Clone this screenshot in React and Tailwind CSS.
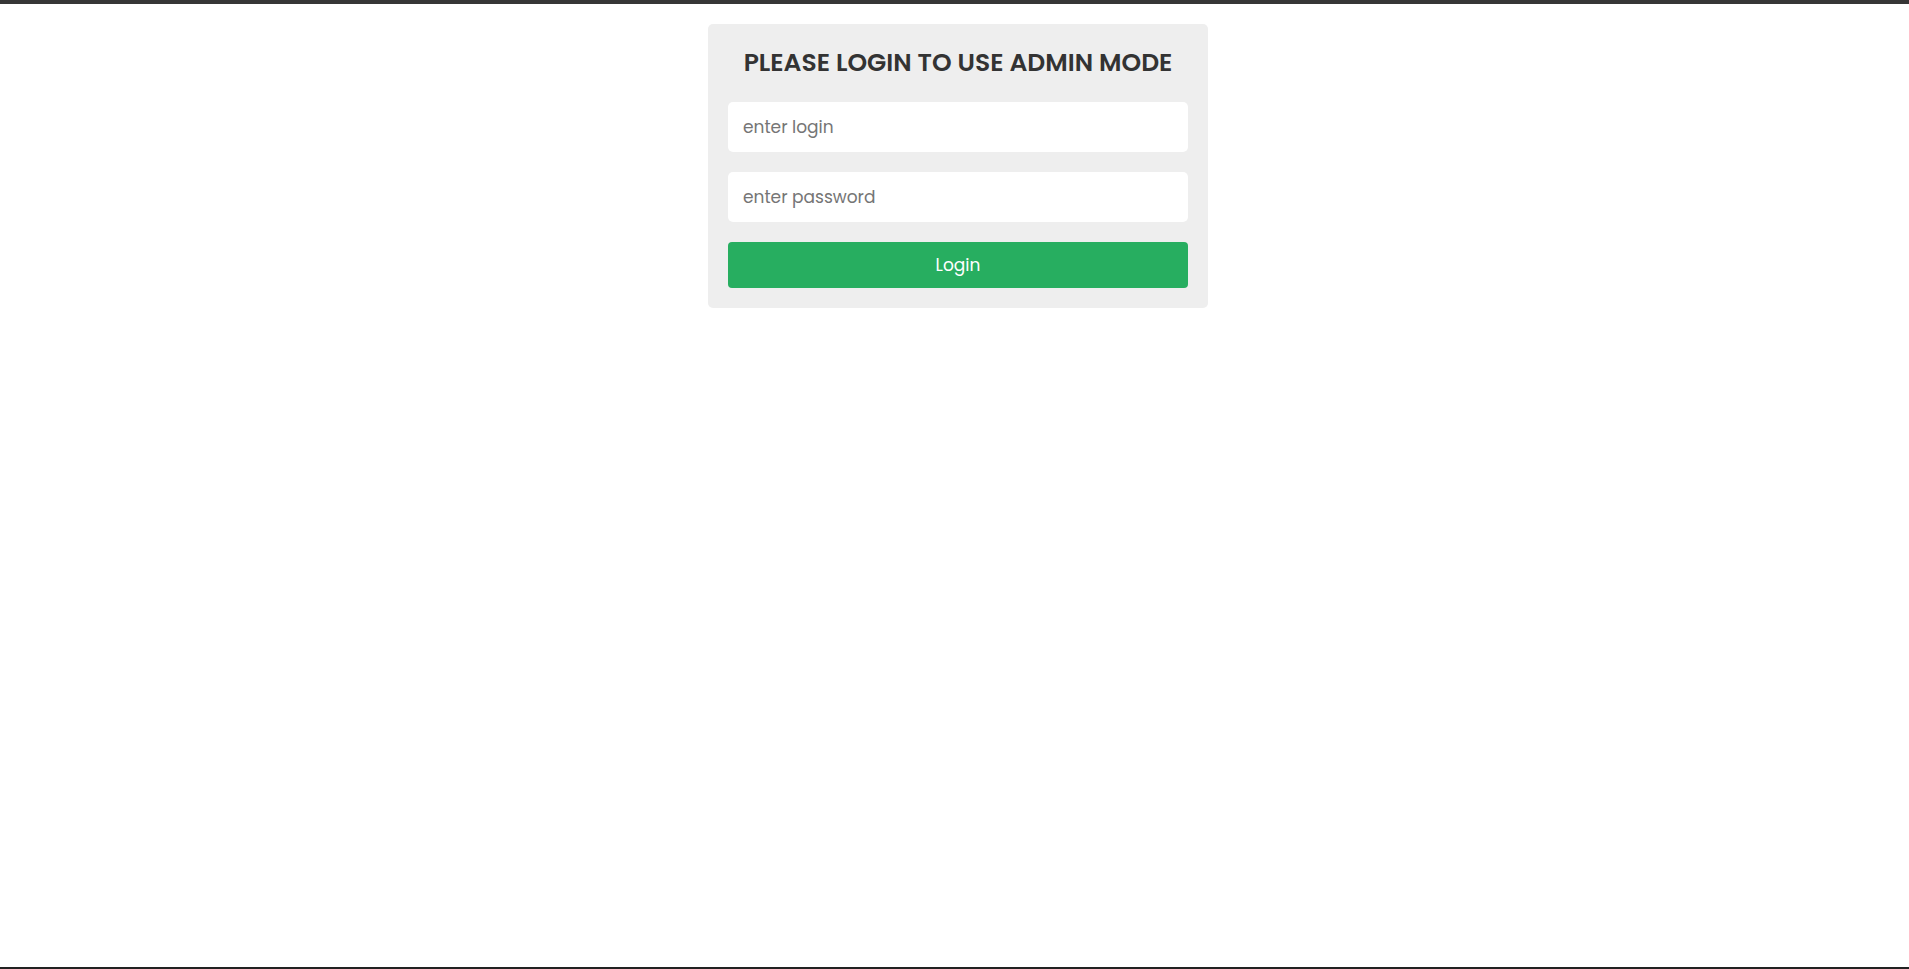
import React, { useState } from "react";

const FONT = "font-['Poppins','Open_Sans','Noto_Sans',sans-serif]";

export default function App() {
  const [login, setLogin] = useState("");
  const [password, setPassword] = useState("");

  const handleSubmit = (e) => {
    e.preventDefault();
  };

  return (
    <div className={`min-h-screen flex flex-col bg-white ${FONT}`}>
      <div className="h-[4px] bg-[#363636]" />

      <div className="flex-1 pl-[7px]">
        <form
          onSubmit={handleSubmit}
          className="mx-auto mt-[20px] w-[500px] rounded-[5px] bg-[#eee] p-5"
        >
          <h2 className="mb-[20px] text-center text-[25px] leading-[38px] font-semibold text-[#333]">
            PLEASE LOGIN TO USE ADMIN MODE
          </h2>

          <div className="flex flex-col gap-5">
            <input
              type="text"
              value={login}
              onChange={(e) => setLogin(e.target.value)}
              placeholder="enter login"
              className="h-[50px] w-full rounded-[5px] bg-white px-[15px] text-[17px] text-[#333] placeholder:text-[#757575] outline-none"
            />
            <input
              type="password"
              value={password}
              onChange={(e) => setPassword(e.target.value)}
              placeholder="enter password"
              className="h-[50px] w-full rounded-[5px] bg-white px-[15px] text-[17px] text-[#333] placeholder:text-[#757575] outline-none"
            />
            <button
              type="submit"
              className="h-[46px] w-full rounded-[4px] bg-[#27ae60] pt-[2px] text-[17px] text-white"
            >
              Login
            </button>
          </div>
        </form>
      </div>

      <div className="h-[2px] bg-[#222]" />
    </div>
  );
}
